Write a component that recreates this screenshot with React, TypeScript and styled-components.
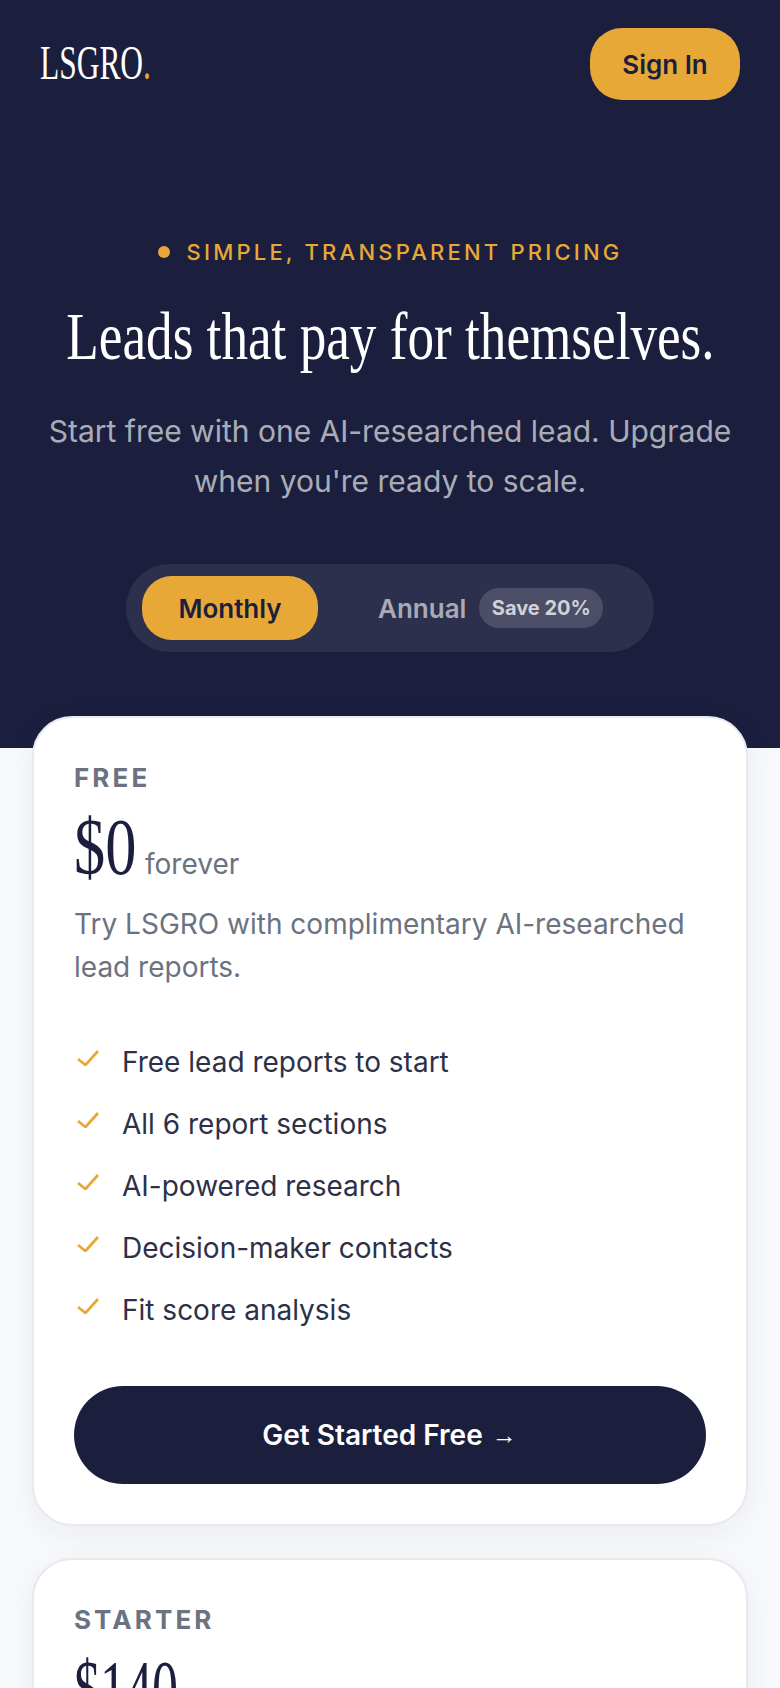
import React from "react";
import styled, { createGlobalStyle } from "styled-components";

const NAVY = "#1b1f3d";
const GOLD = "#e8a838";
const SERIF = `"Liberation Serif", "Times New Roman", serif`;
const SANS = `Inter, "Noto Sans", sans-serif`;

const freeFeatures = [
  "Free lead reports to start",
  "All 6 report sections",
  "AI-powered research",
  "Decision-maker contacts",
  "Fit score analysis",
];

const GlobalStyle = createGlobalStyle`
  html, body {
    margin: 0;
    padding: 0;
    background: #f8f9fb;
  }

  * {
    box-sizing: border-box;
  }
`;

const App: React.FC = () => {
  return (
    <Page>
      <GlobalStyle />
      <Hero>
        <Nav>
          <Logo>
            <LogoText>
              LSGRO<LogoDot>.</LogoDot>
            </LogoText>
          </Logo>
          <SignIn>Sign In</SignIn>
        </Nav>
        <Eyebrow>
          <EyebrowDot />
          Simple, transparent pricing
        </Eyebrow>
        <TitleRow>
          <Title>Leads that pay for themselves.</Title>
        </TitleRow>
        <Subtitle>
          Start free with one AI-researched lead. Upgrade
          <br />
          when you're ready to scale.
        </Subtitle>
        <ToggleRow>
          <Toggle>
            <MonthlyTab>Monthly</MonthlyTab>
            <AnnualTab>
              Annual
              <SaveBadge>Save 20%</SaveBadge>
            </AnnualTab>
          </Toggle>
        </ToggleRow>
      </Hero>
      <Cards>
        <Card>
          <PlanName>Free</PlanName>
          <PriceRow>
            <Price $width={62}>
              <PriceText $scale={0.78}>$0</PriceText>
            </Price>
            <Period>forever</Period>
          </PriceRow>
          <Description>
            Try LSGRO with complimentary AI-researched lead reports.
          </Description>
          <Features>
            {freeFeatures.map((feature) => (
              <Feature key={feature}>
                <CheckIcon viewBox="0 0 22 16">
                  <polyline points="1,9 8.5,15 21,1" />
                </CheckIcon>
                {feature}
              </Feature>
            ))}
          </Features>
          <Cta>
            Get Started Free <CtaArrow>→</CtaArrow>
          </Cta>
        </Card>
        <Card>
          <PlanName>Starter</PlanName>
          <PriceRow>
            <Price $width={104}>
              <PriceText $scale={0.65}>$140</PriceText>
            </Price>
          </PriceRow>
        </Card>
      </Cards>
    </Page>
  );
};

export default App;

const Page = styled.div`
  height: 100vh;
  overflow: hidden;
  background: #f8f9fb;
  font-family: ${SANS};
`;

const Hero = styled.header`
  height: 748px;
  padding: 28px 40px 0;
  background: ${NAVY};
`;

const Nav = styled.nav`
  display: flex;
  align-items: center;
  justify-content: space-between;
`;

const Logo = styled.div`
  width: 110px;
  height: 56px;
`;

const LogoText = styled.span`
  display: inline-block;
  margin-top: -1px;
  color: #ffffff;
  font-family: ${SERIF};
  font-size: 48px;
  line-height: 56px;
  white-space: nowrap;
  transform: scaleX(0.655);
  transform-origin: left center;
`;

const LogoDot = styled.span`
  color: ${GOLD};
`;

const SignIn = styled.button`
  width: 150px;
  height: 72px;
  padding: 0;
  background: ${GOLD};
  border: none;
  border-radius: 32px;
  color: ${NAVY};
  font-family: ${SANS};
  font-size: 26px;
  font-weight: 600;
`;

const Eyebrow = styled.div`
  display: flex;
  align-items: center;
  justify-content: center;
  gap: 17px;
  margin-top: 137px;
  color: ${GOLD};
  font-size: 22px;
  font-weight: 500;
  line-height: 30px;
  letter-spacing: 3.2px;
  text-transform: uppercase;
`;

const EyebrowDot = styled.span`
  width: 12px;
  height: 12px;
  background: ${GOLD};
  border-radius: 50%;
`;

const TitleRow = styled.div`
  display: flex;
  justify-content: center;
  margin-top: 29px;
`;

const Title = styled.h1`
  flex-shrink: 0;
  margin: 0;
  color: #ffffff;
  font-family: ${SERIF};
  font-size: 68px;
  font-weight: 400;
  line-height: 80px;
  white-space: nowrap;
  transform: scaleX(0.782);
`;

const Subtitle = styled.p`
  margin: 30px 0 0;
  color: rgba(255, 255, 255, 0.65);
  font-size: 30px;
  line-height: 50px;
  text-align: center;
  white-space: nowrap;
`;

const ToggleRow = styled.div`
  display: flex;
  justify-content: center;
  margin-top: 58px;
`;

const Toggle = styled.div`
  display: flex;
  align-items: center;
  width: 528px;
  height: 88px;
  padding: 0 16px;
  background: rgba(255, 255, 255, 0.08);
  border-radius: 44px;
`;

const MonthlyTab = styled.div`
  display: flex;
  align-items: center;
  justify-content: center;
  width: 176px;
  height: 64px;
  background: ${GOLD};
  border-radius: 30px;
  color: ${NAVY};
  font-size: 26px;
  font-weight: 600;
`;

const AnnualTab = styled.div`
  display: flex;
  align-items: center;
  gap: 13px;
  margin-left: 60px;
  color: rgba(255, 255, 255, 0.6);
  font-size: 26px;
  font-weight: 600;
`;

const SaveBadge = styled.span`
  display: flex;
  align-items: center;
  justify-content: center;
  width: 124px;
  height: 40px;
  background: rgba(255, 255, 255, 0.15);
  border-radius: 20px;
  color: rgba(255, 255, 255, 0.75);
  font-size: 20px;
  font-weight: 700;
`;

const Cards = styled.main`
  display: flex;
  flex-direction: column;
  gap: 32px;
  margin-top: -32px;
  padding: 0 32px;
`;

const Card = styled.section`
  padding: 44px 40px 40px;
  background: #ffffff;
  border: 2px solid #e8e9ee;
  border-radius: 40px;
  box-shadow: 0 8px 32px rgba(26, 31, 60, 0.06);
`;

const PlanName = styled.div`
  margin-bottom: 7px;
  color: #6b7280;
  font-size: 26px;
  font-weight: 700;
  line-height: 32px;
  letter-spacing: 3.1px;
  text-transform: uppercase;
`;

const PriceRow = styled.div`
  display: flex;
  align-items: baseline;
  gap: 9px;
  height: 92px;
`;

const Price = styled.span<{ $width: number }>`
  width: ${(props) => props.$width}px;
  color: ${NAVY};
  font-family: ${SERIF};
  font-size: 80px;
  line-height: 92px;
`;

const PriceText = styled.span<{ $scale: number }>`
  display: inline-block;
  white-space: nowrap;
  transform: scaleX(${(props) => props.$scale});
  transform-origin: left center;
`;

const Period = styled.span`
  color: #6b7280;
  font-size: 28px;
`;

const Description = styled.p`
  margin: 10px 0 0;
  color: #6b7280;
  font-size: 28px;
  line-height: 43px;
`;

const Features = styled.ul`
  display: flex;
  flex-direction: column;
  margin: 42px 0 0;
  padding: 0;
  list-style: none;
`;

const Feature = styled.li`
  display: flex;
  align-items: center;
  gap: 23px;
  height: 62px;
  color: #2d3047;
  font-size: 28px;
`;

const CheckIcon = styled.svg`
  flex-shrink: 0;
  width: 22px;
  height: 16px;
  margin: -8px 0 0 3px;
  fill: none;
  stroke: ${GOLD};
  stroke-width: 2.8;
`;

const Cta = styled.button`
  display: block;
  width: 100%;
  height: 98px;
  margin-top: 45px;
  background: ${NAVY};
  border: none;
  border-radius: 49px;
  color: #ffffff;
  font-family: ${SANS};
  font-size: 28px;
  font-weight: 600;
`;

const CtaArrow = styled.span`
  margin: 0 1px 0 2px;
  font-family: "Liberation Sans", sans-serif;
  font-size: 25px;
  font-weight: 400;
  vertical-align: 1px;
`;
